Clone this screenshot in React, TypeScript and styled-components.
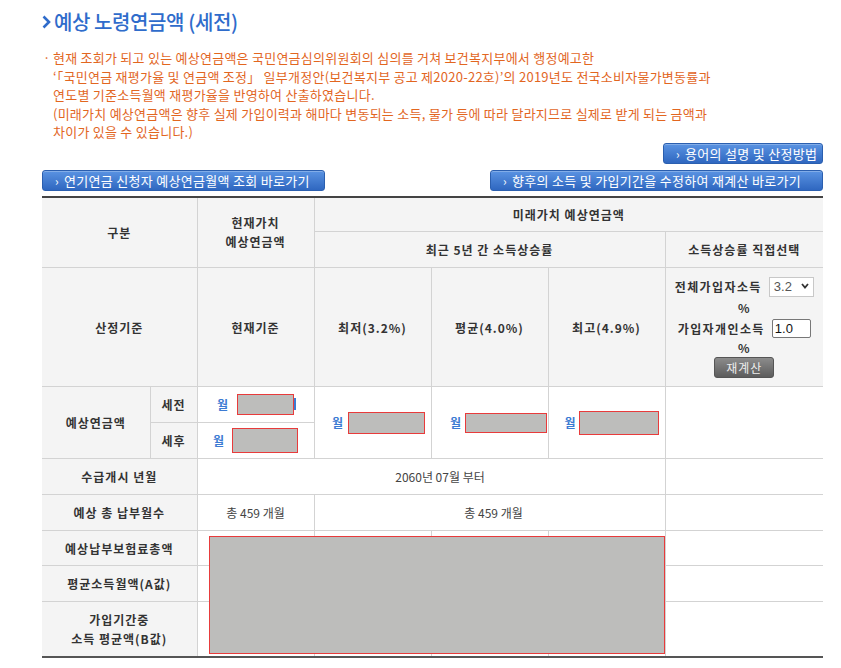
import styled, { createGlobalStyle } from "styled-components";

const GlobalStyle = createGlobalStyle`
  body {
    margin: 0;
    background: #fff;
    font-family: "Noto Sans CJK KR", "Noto Sans", sans-serif;
    color: #333;
  }
`;

const Page = styled.div`
  width: 781px;
  padding: 8px 0 0 42px;
`;

const TitleRow = styled.div`
  display: flex;
  align-items: center;
  gap: 3px;
  height: 28px;
`;

const Title = styled.h2`
  margin: 0;
  font-size: 20px;
  font-weight: 500;
  line-height: 28px;
  color: #2f6ccb;
  letter-spacing: -0.4px;
`;

const Notice = styled.p`
  margin: 13px 0 0;
  padding-left: 11px;
  font-size: 13px;
  letter-spacing: 0.25px;
  line-height: 18.5px;
  color: #e2661f;
  white-space: nowrap;
`;

const Bullet = styled.span`
  display: inline-block;
  width: 10px;
  margin-left: -10px;
`;

const ButtonArea = styled.div`
  display: flex;
  flex-direction: column;
  gap: 6px;
  margin-top: 1px;
`;

const ButtonRow = styled.div<{ $spread?: boolean }>`
  display: flex;
  justify-content: ${({ $spread }) => ($spread ? "space-between" : "flex-end")};
`;

const LinkButton = styled.button<{ $width: number }>`
  display: inline-flex;
  align-items: center;
  gap: 5px;
  box-sizing: border-box;
  width: ${({ $width }) => $width}px;
  height: 21px;
  padding: 0 0 0 12px;
  border: 1px solid #2b5faf;
  border-radius: 3px;
  background: linear-gradient(#5a93e2, #2f67c0);
  box-shadow: inset 0 1px 0 rgba(255, 255, 255, 0.25);
  color: #fff;
  font-family: inherit;
  font-size: 13px;
  letter-spacing: 0.3px;
  line-height: 19px;
  white-space: nowrap;
  cursor: pointer;

  & > i {
    font-style: normal;
    font-size: 12px;
  }
`;

const TableWrap = styled.div`
  position: relative;
  margin-top: 5px;
`;

const Grid = styled.table`
  width: 781px;
  table-layout: fixed;
  border-collapse: collapse;
  border-top: 2px solid #444;
  border-bottom: 2px solid #555;
`;

const Th = styled.th`
  padding: 0;
  background: #f4f4f4;
  border: 1px solid #d3d3d3;
  font-size: 12px;
  font-weight: 700;
  letter-spacing: 1px;
  line-height: 19px;
  color: #333;
  text-align: center;
  vertical-align: middle;

  &:first-child {
    border-left: none;
  }
  &:last-child {
    border-right: none;
  }
`;

const Td = styled.td<{ $shift?: number }>`
  padding: 0 0 0 ${({ $shift }) => $shift ?? 0}px;
  background: #fff;
  border: 1px solid #d3d3d3;
  font-size: 12px;
  line-height: 18px;
  color: #444;
  text-align: center;
  vertical-align: middle;
  white-space: nowrap;

  &:last-child {
    border-right: none;
  }
`;

const Amount = styled.span`
  display: inline-flex;
  align-items: center;
`;

const MonthLabel = styled.b`
  font-size: 12px;
  color: #3c7bd3;
`;

const Redact = styled.span<{ $w: number; $h: number; $gap: number; $tail?: boolean }>`
  position: relative;
  display: inline-block;
  box-sizing: border-box;
  width: ${({ $w }) => $w}px;
  height: ${({ $h }) => $h}px;
  margin-left: ${({ $gap }) => $gap}px;
  background: #bdbdbb;
  border: 1.5px solid #e83b3b;

  &::after {
    content: "";
    display: ${({ $tail }) => ($tail ? "block" : "none")};
    position: absolute;
    right: -3px;
    top: 3px;
    width: 2px;
    height: 12px;
    background: #3c7bd3;
  }
`;

const Overlay = styled.div`
  position: absolute;
  left: 167px;
  top: 340px;
  width: 456px;
  height: 118px;
  box-sizing: border-box;
  background: #bdbdbb;
  border: 1.5px solid #e83b3b;
`;

const Controls = styled.div`
  display: flex;
  flex-direction: column;
  align-items: center;
`;

const CtrlLine = styled.div<{ $h: number }>`
  display: flex;
  align-items: center;
  gap: 7px;
  height: ${({ $h }) => $h}px;
  letter-spacing: 1.4px;
`;

const Percent = styled.div<{ $h: number }>`
  height: ${({ $h }) => $h}px;
  line-height: ${({ $h }) => $h}px;
`;

const SelectWrap = styled.span`
  position: relative;
  display: inline-block;

  & > svg {
    position: absolute;
    right: 5px;
    top: 7px;
    pointer-events: none;
  }
`;

const Select = styled.select`
  appearance: none;
  box-sizing: border-box;
  width: 45px;
  height: 20px;
  padding: 0 0 0 4px;
  border: 1px solid #c8c8c8;
  background: #fff;
  font-family: "Liberation Sans", Arial, sans-serif;
  font-size: 13px;
  letter-spacing: 0;
  color: #555;
`;

const NumInput = styled.input`
  box-sizing: border-box;
  width: 39px;
  height: 19px;
  padding: 0 2px;
  border: 1px solid #777;
  border-radius: 2px;
  font-family: "Liberation Sans", Arial, sans-serif;
  font-size: 13px;
  color: #111;
  font-weight: 400;
  letter-spacing: 0;
`;

const RecalcButton = styled.button`
  box-sizing: border-box;
  width: 60px;
  height: 21px;
  padding: 0;
  border: 1px solid #555;
  border-radius: 3px;
  background: linear-gradient(#8c8c8c, #5c5c5c);
  color: #eee;
  font-family: inherit;
  font-size: 12px;
  letter-spacing: 1px;
  cursor: pointer;
`;

export default function App() {
  return (
    <>
      <GlobalStyle />
      <Page>
        <TitleRow>
          <svg width="9" height="14" viewBox="0 0 9 14">
            <polyline points="1.5,1.5 7,7 1.5,12.5" fill="none" stroke="#2f6ccb" strokeWidth="2.6" />
          </svg>
          <Title>예상 노령연금액 (세전)</Title>
        </TitleRow>

        <Notice>
          <Bullet>·</Bullet>현재 조회가 되고 있는 예상연금액은 국민연금심의위원회의 심의를 거쳐 보건복지부에서 행정예고한
          <br />
          ‘「국민연금 재평가율 및 연금액 조정」 일부개정안(보건복지부 공고 제2020-22호)’의 2019년도 전국소비자물가변동률과
          <br />
          연도별 기준소득월액 재평가율을 반영하여 산출하였습니다.
          <br />
          (미래가치 예상연금액은 향후 실제 가입이력과 해마다 변동되는 소득, 물가 등에 따라 달라지므로 실제로 받게 되는 금액과
          <br />
          차이가 있을 수 있습니다.)
        </Notice>

        <ButtonArea>
          <ButtonRow>
            <LinkButton $width={160}>
              <i>›</i>용어의 설명 및 산정방법
            </LinkButton>
          </ButtonRow>
          <ButtonRow $spread>
            <LinkButton $width={283}>
              <i>›</i>연기연금 신청자 예상연금월액 조회 바로가기
            </LinkButton>
            <LinkButton $width={333}>
              <i>›</i>향후의 소득 및 가입기간을 수정하여 재계산 바로가기
            </LinkButton>
          </ButtonRow>
        </ButtonArea>

        <TableWrap>
          <Grid>
            <colgroup>
              <col style={{ width: 108 }} />
              <col style={{ width: 47 }} />
              <col style={{ width: 117 }} />
              <col style={{ width: 117 }} />
              <col style={{ width: 117 }} />
              <col style={{ width: 117 }} />
              <col style={{ width: 158 }} />
            </colgroup>
            <thead>
              <tr style={{ height: 35 }}>
                <Th colSpan={2} rowSpan={2}>구분</Th>
                <Th rowSpan={2}>
                  현재가치
                  <br />
                  예상연금액
                </Th>
                <Th colSpan={4}>미래가치 예상연금액</Th>
              </tr>
              <tr style={{ height: 36 }}>
                <Th colSpan={3}>최근 5년 간 소득상승률</Th>
                <Th>소득상승률 직접선택</Th>
              </tr>
              <tr style={{ height: 119 }}>
                <Th colSpan={2}>산정기준</Th>
                <Th>현재기준</Th>
                <Th>최저(3.2%)</Th>
                <Th>평균(4.0%)</Th>
                <Th>최고(4.9%)</Th>
                <Th>
                  <Controls>
                    <CtrlLine $h={20}>
                      전체가입자소득
                      <SelectWrap>
                        <Select defaultValue="3.2">
                          <option>3.2</option>
                          <option>4.0</option>
                          <option>4.9</option>
                        </Select>
                        <svg width="8" height="6" viewBox="0 0 8 6">
                          <polyline points="1,1 4,4.5 7,1" fill="none" stroke="#333" strokeWidth="1.8" />
                        </svg>
                      </SelectWrap>
                    </CtrlLine>
                    <Percent $h={22}>%</Percent>
                    <CtrlLine $h={19}>
                      가입자개인소득
                      <NumInput defaultValue="1.0" />
                    </CtrlLine>
                    <Percent $h={19}>%</Percent>
                    <RecalcButton>재계산</RecalcButton>
                  </Controls>
                </Th>
              </tr>
            </thead>
            <tbody>
              <tr style={{ height: 36 }}>
                <Th rowSpan={2}>예상연금액</Th>
                <Th>세전</Th>
                <Td>
                  <Amount>
                    <MonthLabel>월</MonthLabel>
                    <Redact $w={57} $h={21} $gap={9} $tail />
                  </Amount>
                </Td>
                <Td rowSpan={2} $shift={12}>
                  <Amount>
                    <MonthLabel>월</MonthLabel>
                    <Redact $w={77} $h={22} $gap={5} />
                  </Amount>
                </Td>
                <Td rowSpan={2} $shift={18}>
                  <Amount>
                    <MonthLabel>월</MonthLabel>
                    <Redact $w={82} $h={20} $gap={4} />
                  </Amount>
                </Td>
                <Td rowSpan={2} $shift={10}>
                  <Amount>
                    <MonthLabel>월</MonthLabel>
                    <Redact $w={80} $h={24} $gap={3} />
                  </Amount>
                </Td>
                <Td rowSpan={2} />
              </tr>
              <tr style={{ height: 36 }}>
                <Th>세후</Th>
                <Td>
                  <Amount>
                    <MonthLabel>월</MonthLabel>
                    <Redact $w={66} $h={25} $gap={8} />
                  </Amount>
                </Td>
              </tr>
              <tr style={{ height: 36 }}>
                <Th colSpan={2}>수급개시 년월</Th>
                <Td colSpan={4} $shift={18}>2060년 07월 부터</Td>
                <Td />
              </tr>
              <tr style={{ height: 36 }}>
                <Th colSpan={2}>예상 총 납부월수</Th>
                <Td>총 459 개월</Td>
                <Td colSpan={3} $shift={8}>총 459 개월</Td>
                <Td />
              </tr>
              <tr style={{ height: 35 }}>
                <Th colSpan={2}>예상납부보험료총액</Th>
                <Td />
                <Td />
                <Td />
                <Td />
                <Td />
              </tr>
              <tr style={{ height: 36 }}>
                <Th colSpan={2}>평균소득월액(A값)</Th>
                <Td />
                <Td />
                <Td />
                <Td />
                <Td />
              </tr>
              <tr style={{ height: 55 }}>
                <Th colSpan={2}>
                  가입기간중
                  <br />
                  소득 평균액(B값)
                </Th>
                <Td />
                <Td />
                <Td />
                <Td />
                <Td />
              </tr>
            </tbody>
          </Grid>
          <Overlay />
        </TableWrap>
      </Page>
    </>
  );
}
